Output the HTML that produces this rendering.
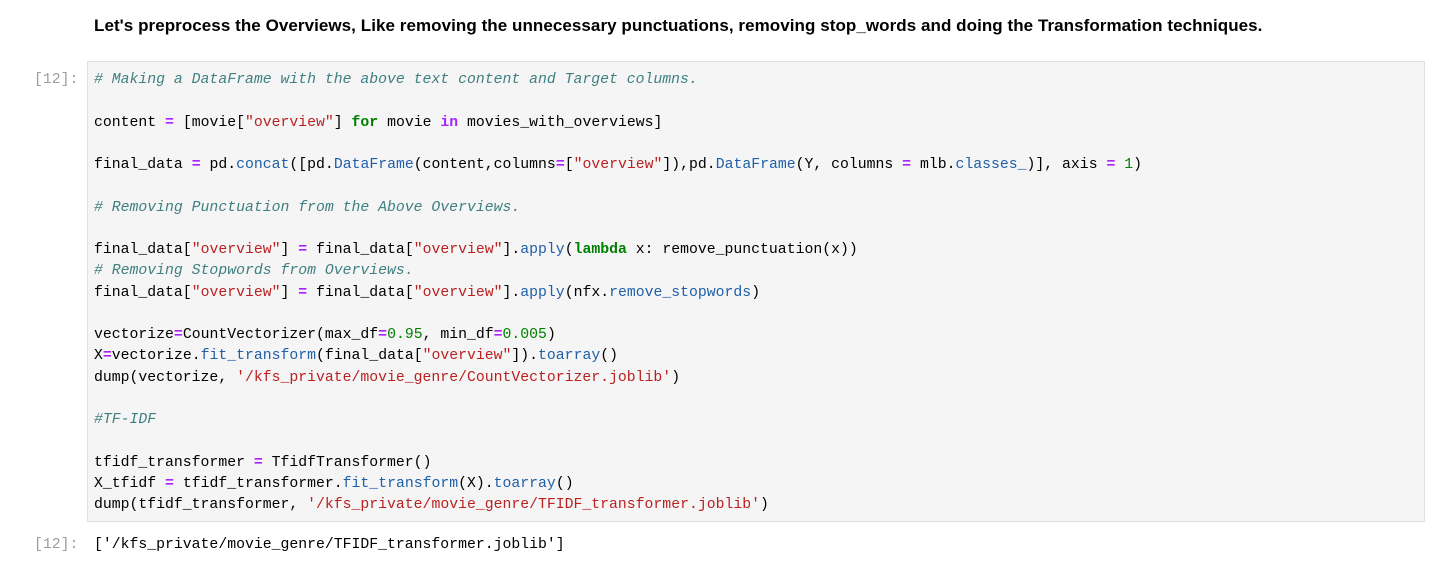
<!DOCTYPE html>
<html><head><style>
body{margin:0;background:#fff;width:1445px;height:572px;overflow:hidden;position:relative;font-family:"Liberation Mono",monospace;}
.h{position:absolute;left:94px;top:16px;font:bold 17px "Liberation Sans",sans-serif;color:#000;white-space:nowrap;letter-spacing:0.06px}
.box{position:absolute;left:87px;top:61px;width:1336px;height:459px;background:#f5f5f5;border:1px solid #e0e0e0;}
pre{margin:0;position:absolute;left:94px;top:70px;font:14.8px/21.25px "Liberation Mono",monospace;color:#000;}
.p{position:absolute;left:34px;font:14.8px "Liberation Mono",monospace;color:#9e9e9e}
.c{color:#408080;font-style:italic}.s{color:#ba2121}.k{color:#008000;font-weight:bold}.o{color:#aa22ff;font-weight:bold}.f{color:#1f5fa8}.n{color:#008000}
</style></head><body>
<div class="h">Let's preprocess the Overviews, Like removing the unnecessary punctuations, removing stop_words and doing the Transformation techniques.</div>
<div class="p" style="top:72px">[12]:</div>
<div class="box"></div>
<pre><span class="c"># Making a DataFrame with the above text content and Target columns.</span>

content <span class="o">=</span> [movie[<span class="s">"overview"</span>] <span class="k">for</span> movie <span class="o k">in</span> movies_with_overviews]

final_data <span class="o">=</span> pd<span>.</span><span class="f">concat</span>([pd<span>.</span><span class="f">DataFrame</span>(content,columns<span class="o">=</span>[<span class="s">"overview"</span>]),pd<span>.</span><span class="f">DataFrame</span>(Y, columns <span class="o">=</span> mlb<span>.</span><span class="f">classes_</span>)], axis <span class="o">=</span> <span class="n">1</span>)

<span class="c"># Removing Punctuation from the Above Overviews.</span>

final_data[<span class="s">"overview"</span>] <span class="o">=</span> final_data[<span class="s">"overview"</span>]<span>.</span><span class="f">apply</span>(<span class="k">lambda</span> x: remove_punctuation(x))
<span class="c"># Removing Stopwords from Overviews.</span>
final_data[<span class="s">"overview"</span>] <span class="o">=</span> final_data[<span class="s">"overview"</span>]<span>.</span><span class="f">apply</span>(nfx<span>.</span><span class="f">remove_stopwords</span>)

vectorize<span class="o">=</span>CountVectorizer(max_df<span class="o">=</span><span class="n">0.95</span>, min_df<span class="o">=</span><span class="n">0.005</span>)
X<span class="o">=</span>vectorize<span>.</span><span class="f">fit_transform</span>(final_data[<span class="s">"overview"</span>])<span>.</span><span class="f">toarray</span>()
dump(vectorize, <span class="s">'/kfs_private/movie_genre/CountVectorizer.joblib'</span>)

<span class="c">#TF-IDF</span>

tfidf_transformer <span class="o">=</span> TfidfTransformer()
X_tfidf <span class="o">=</span> tfidf_transformer<span>.</span><span class="f">fit_transform</span>(X)<span>.</span><span class="f">toarray</span>()
dump(tfidf_transformer, <span class="s">'/kfs_private/movie_genre/TFIDF_transformer.joblib'</span>)</pre>
<div class="p" style="top:537px">[12]:</div>
<pre style="top:535px">['/kfs_private/movie_genre/TFIDF_transformer.joblib']</pre>
</body></html>
